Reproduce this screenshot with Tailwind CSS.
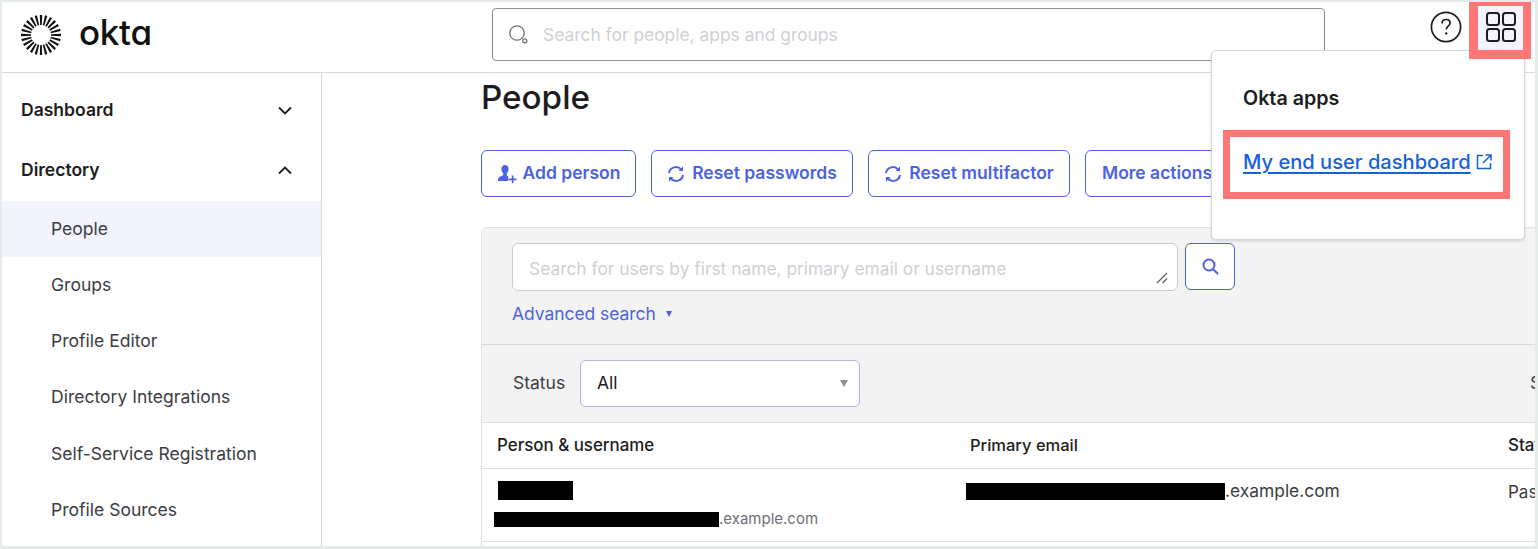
<!DOCTYPE html>
<html lang="en">
  <head>
    <meta charset="UTF-8" />
    <meta name="viewport" content="width=device-width, initial-scale=1.0" />
    <script src="https://cdn.jsdelivr.net/npm/@tailwindcss/browser@4"></script>
    <title>People - Okta</title>
  </head>
  <body class="bg-[#e4ebe9] overflow-hidden font-['Inter',sans-serif] text-[#1d1d21]">
    <div class="relative w-[1538px] h-[549px] pt-[2px] pl-[2px] pr-[3px] pb-[3px]">
      <div class="bg-white w-full h-full flex flex-col overflow-hidden">
        <!-- Top bar -->
        <header class="h-[71px] shrink-0 border-b border-[#d7d7dc] flex items-center relative">
          <div class="w-[490px] shrink-0 flex items-center pl-[19px] pb-[5px] gap-[18px]">
            <svg width="40" height="40" viewBox="-20 -20 40 40" fill="#111">
              <defs><path id="ray" d="M-1.2 -20 L1.2 -20 L0.8 -10 L-0.8 -10 Z" /></defs>
              <use href="#ray" />
              <use href="#ray" transform="rotate(15)" />
              <use href="#ray" transform="rotate(30)" />
              <use href="#ray" transform="rotate(45)" />
              <use href="#ray" transform="rotate(60)" />
              <use href="#ray" transform="rotate(75)" />
              <use href="#ray" transform="rotate(90)" />
              <use href="#ray" transform="rotate(105)" />
              <use href="#ray" transform="rotate(120)" />
              <use href="#ray" transform="rotate(135)" />
              <use href="#ray" transform="rotate(150)" />
              <use href="#ray" transform="rotate(165)" />
              <use href="#ray" transform="rotate(180)" />
              <use href="#ray" transform="rotate(195)" />
              <use href="#ray" transform="rotate(210)" />
              <use href="#ray" transform="rotate(225)" />
              <use href="#ray" transform="rotate(240)" />
              <use href="#ray" transform="rotate(255)" />
              <use href="#ray" transform="rotate(270)" />
              <use href="#ray" transform="rotate(285)" />
              <use href="#ray" transform="rotate(300)" />
              <use href="#ray" transform="rotate(315)" />
              <use href="#ray" transform="rotate(330)" />
              <use href="#ray" transform="rotate(345)" />
            </svg>
            <span class="text-[35px] leading-none font-medium tracking-[-0.3px] text-[#111] mb-[4px] [font-feature-settings:'cv11']">okta</span>
          </div>
          <div class="w-[833px] h-[53px] mb-[6px] border border-[#8c8c96] rounded-[4px] flex items-center pl-[16px] gap-[14px] shrink-0">
            <svg class="mt-[2px]" width="20" height="20" viewBox="0 0 20 20" fill="none" stroke="#6e6e78" stroke-width="1.3">
              <circle cx="8" cy="8" r="7.2" />
              <circle cx="15.8" cy="15.8" r="2" />
            </svg>
            <span class="text-[17.4px] text-[#d0d0d4] pt-[2px]">Search for people, apps and groups</span>
          </div>
          <svg class="ml-[105px] mb-[20px] shrink-0" width="32" height="32" viewBox="0 0 32 32" fill="none" stroke="#1d1d21" stroke-width="1.7">
            <circle cx="16" cy="16" r="14.6" />
            <path d="M12 12.500c0-2.400 1.800-4 4.100-4 2.300 0 4 1.500 4 3.600 0 3-3.900 3.200-3.900 6.400" stroke-width="1.7" />
            <circle cx="16.2" cy="22.4" r="1.2" fill="#1d1d21" stroke="none" />
          </svg>
          <div class="ml-[16px] mb-[20px] w-[46px] h-[46px] bg-[#f2f3fd] flex items-center justify-center shrink-0">
            <svg width="32" height="32" viewBox="0 0 32 32" fill="none" stroke="#1d1d21" stroke-width="2">
              <rect x="2" y="2" width="12" height="12" rx="2.5" />
              <rect x="18" y="2" width="12" height="12" rx="2.5" />
              <rect x="2" y="18" width="12" height="12" rx="2.5" />
              <rect x="18" y="18" width="12" height="12" rx="2.5" />
            </svg>
          </div>
        </header>

        <div class="flex flex-1 min-h-0">
          <!-- Side nav -->
          <nav class="w-[320px] shrink-0 border-r border-[#d7d7dc] text-[17.55px]">
            <div class="h-[60px] mt-[7px] pl-[19px] pr-[29px] flex items-center justify-between font-semibold">
              <span>Dashboard</span>
              <svg width="14" height="9" viewBox="0 0 14 9" fill="none" stroke="#1d1d21" stroke-width="1.8"><path d="M1 1.500l6 6 6-6" /></svg>
            </div>
            <div class="h-[61px] pb-[1px] pl-[19px] pr-[29px] flex items-center justify-between font-semibold">
              <span>Directory</span>
              <svg width="14" height="9" viewBox="0 0 14 9" fill="none" stroke="#1d1d21" stroke-width="1.8"><path d="M1 7.500l6-6 6 6" /></svg>
            </div>
            <ul class="text-[#3c3c44]">
              <li class="h-[56px] pl-[49px] flex items-center bg-[#f2f3fd]">People</li>
              <li class="h-[56px] pl-[49px] flex items-center">Groups</li>
              <li class="h-[56px] pl-[49px] flex items-center">Profile Editor</li>
              <li class="h-[57px] pl-[49px] flex items-center">Directory Integrations</li>
              <li class="h-[56px] pl-[49px] flex items-center">Self-Service Registration</li>
              <li class="h-[56px] pl-[49px] flex items-center">Profile Sources</li>
            </ul>
          </nav>

          <!-- Main content -->
          <main class="flex-1 min-w-0 pl-[159px] overflow-hidden">
            <h1 class="text-[33.2px] leading-[48px] font-medium">People</h1>
            <div class="flex gap-[15px] mt-[29px] text-[17.5px] font-semibold text-[#4d62e0]">
              <button class="h-[47px] w-[155px] shrink-0 border border-[#4d62e0] rounded-[6px] flex items-center justify-center gap-[6px]">
                <svg width="20" height="20" viewBox="0 0 20 20" fill="#4d62e0">
                  <path d="M8 1a3.600 3.600 0 0 1 3.600 3.900c0 2-.8 3.400-1.800 4.300v2.600c.6.200 1 .4 1.500.6v4.600H1v-2.300c1.200-2 3.300-2.900 5.200-3.400V9.200C5.200 8.300 4.400 6.900 4.400 4.900A3.600 3.600 0 0 1 8 1z" />
                  <path d="M14.800 11.500h1.700v3h3v1.700h-3v3h-1.700v-3h-3v-1.700h3z" />
                </svg>
                Add person
              </button>
              <button class="h-[47px] w-[202px] shrink-0 border border-[#4d62e0] rounded-[6px] flex items-center justify-center gap-[7px]">
                <svg width="18" height="18" viewBox="0 0 18 18" fill="none" stroke="#4d62e0" stroke-width="2">
                  <path d="M2 8a7 7 0 0 1 12.200-3.500" />
                  <path d="M16 10a7 7 0 0 1-12.200 3.500" />
                  <path d="M16 1.500v4.500h-4.500" fill="#4d62e0" stroke="none" />
                  <path d="M2 16.500v-4.500h4.500" fill="#4d62e0" stroke="none" />
                </svg>
                Reset passwords
              </button>
              <button class="h-[47px] w-[202px] shrink-0 border border-[#4d62e0] rounded-[6px] flex items-center justify-center gap-[7px]">
                <svg width="18" height="18" viewBox="0 0 18 18" fill="none" stroke="#4d62e0" stroke-width="2">
                  <path d="M2 8a7 7 0 0 1 12.200-3.500" />
                  <path d="M16 10a7 7 0 0 1-12.200 3.500" />
                  <path d="M16 1.500v4.500h-4.500" fill="#4d62e0" stroke="none" />
                  <path d="M2 16.500v-4.500h4.500" fill="#4d62e0" stroke="none" />
                </svg>
                Reset multifactor
              </button>
              <button class="h-[47px] w-[160px] shrink-0 border border-[#4d62e0] rounded-[6px] text-left pl-[16px]">More actions</button>
            </div>

            <!-- Filter panel and table -->
            <section class="mt-[30px] border-l border-t border-[#e1e1e4] rounded-tl-[6px] w-[1060px]">
              <div class="bg-[#f3f3f3] h-[117px] border-b border-[#d7d7dc] pt-[15px] pl-[30px]">
                <div class="flex gap-[7px]">
                  <div class="relative w-[666px] h-[48px] bg-white border border-[#c9c9cf] rounded-[6px] flex items-center pl-[16px] pt-[5px] text-[17.36px] text-[#cfcfd3] shrink-0">
                    Search for users by first name, primary email or username
                    <svg class="absolute right-[9px] bottom-[6px]" width="12" height="12" viewBox="0 0 12 12" stroke="#5a5a62" stroke-width="1.200"><path d="M1 11L11 1M6.500 11L11 6.500" /></svg>
                  </div>
                  <div class="w-[50px] h-[47px] bg-white border border-[#4d62e0] rounded-[6px] flex items-center justify-center shrink-0">
                    <svg width="17" height="17" viewBox="0 0 17 17" fill="none" stroke="#4d62e0" stroke-width="2"><circle cx="7" cy="7" r="5.500" /><path d="M11 11l5 5" /></svg>
                  </div>
                </div>
                <div class="mt-[10px] flex items-center text-[17.4px] leading-[26px] text-[#4d62e0]">
                  Advanced search
                  <span class="ml-[10px] w-0 h-0 border-x-[3.5px] border-x-transparent border-t-[6px] border-t-[#4d62e0]"></span>
                </div>
              </div>
              <div class="bg-[#f3f3f3] h-[78px] border-b border-[#dfdfe2] pl-[31px] flex items-center text-[17.5px]">
                <span class="text-[#3c3c44] w-[67px] shrink-0">Status</span>
                <div class="w-[280px] h-[47px] bg-white border border-[#b4b8d6] rounded-[6px] flex items-center justify-between pl-[16px] pr-[11px] shrink-0">
                  <span>All</span>
                  <span class="w-0 h-0 border-x-[4px] border-x-transparent border-t-[7px] border-t-[#8c8c96]"></span>
                </div>
                <span class="ml-[670px] text-[#3c3c44] shrink-0">Sort</span>
              </div>
              <div class="h-[46px] border-b border-[#dfdfe2] flex items-center text-[16.9px] font-medium">
                <span class="w-[488px] pl-[15px] shrink-0">Person &amp; username</span>
                <span class="w-[538px] shrink-0 text-[16.5px]">Primary email</span>
                <span class="shrink-0">Status</span>
              </div>
              <div class="h-[73px] border-b border-[#dfdfe2] flex">
                <div class="w-[488px] relative shrink-0">
                  <div class="absolute left-[16px] top-[12px] w-[75px] h-[19px] bg-black"></div>
                  <div class="absolute left-[12px] top-[42px] flex items-center text-[15px] leading-[16px] text-[#6e6e78]">
                    <span class="w-[225px] h-[15px] bg-black"></span>.example.com
                  </div>
                </div>
                <div class="w-[538px] relative shrink-0">
                  <div class="absolute left-[-4px] top-[13px] flex items-center text-[17.4px] leading-[18px] text-[#3c3c44]">
                    <span class="w-[259px] h-[17px] bg-black"></span>.example.com
                  </div>
                </div>
                <span class="pt-[11px] text-[17px] text-[#3c3c44] shrink-0">Password</span>
              </div>
              <div class="h-[20px]"></div>
            </section>
          </main>
        </div>
      </div>

      <!-- Apps dropdown -->
      <div class="absolute left-[1211px] top-[50px] w-[314px] h-[190px] bg-white border border-[#d7d7dc] rounded-[5px] shadow-[0_1px_3px_rgba(0,0,0,0.15)] pl-[31px]">
        <p class="mt-[35px] text-[19.7px] leading-[24px] font-semibold">Okta apps</p>
        <a class="mt-[40px] flex items-center gap-[5px] text-[20.1px] leading-[24px] font-medium text-[#1662dd] underline decoration-2 underline-offset-[3px]" href="#">
          My end user dashboard
          <svg width="16" height="16" viewBox="0 0 16 16" fill="none" stroke="#1662dd" stroke-width="1.500"><path d="M7 1.500H1.500v13h13V9M9.500 1H15v5.500M15 1L7 9" /></svg>
        </a>
      </div>

      <!-- Screenshot callouts -->
      <div class="absolute left-[1469px] top-[2px] w-[62px] h-[57px] border-l-[9px] border-r-[8px] border-t-[4px] border-b-[9px] border-[#ff7676] pointer-events-none"></div>
      <div class="absolute left-[1223px] top-[130px] w-[287px] h-[69px] border-[7px] border-[#ff7676] pointer-events-none"></div>
    </div>
  </body>
</html>
